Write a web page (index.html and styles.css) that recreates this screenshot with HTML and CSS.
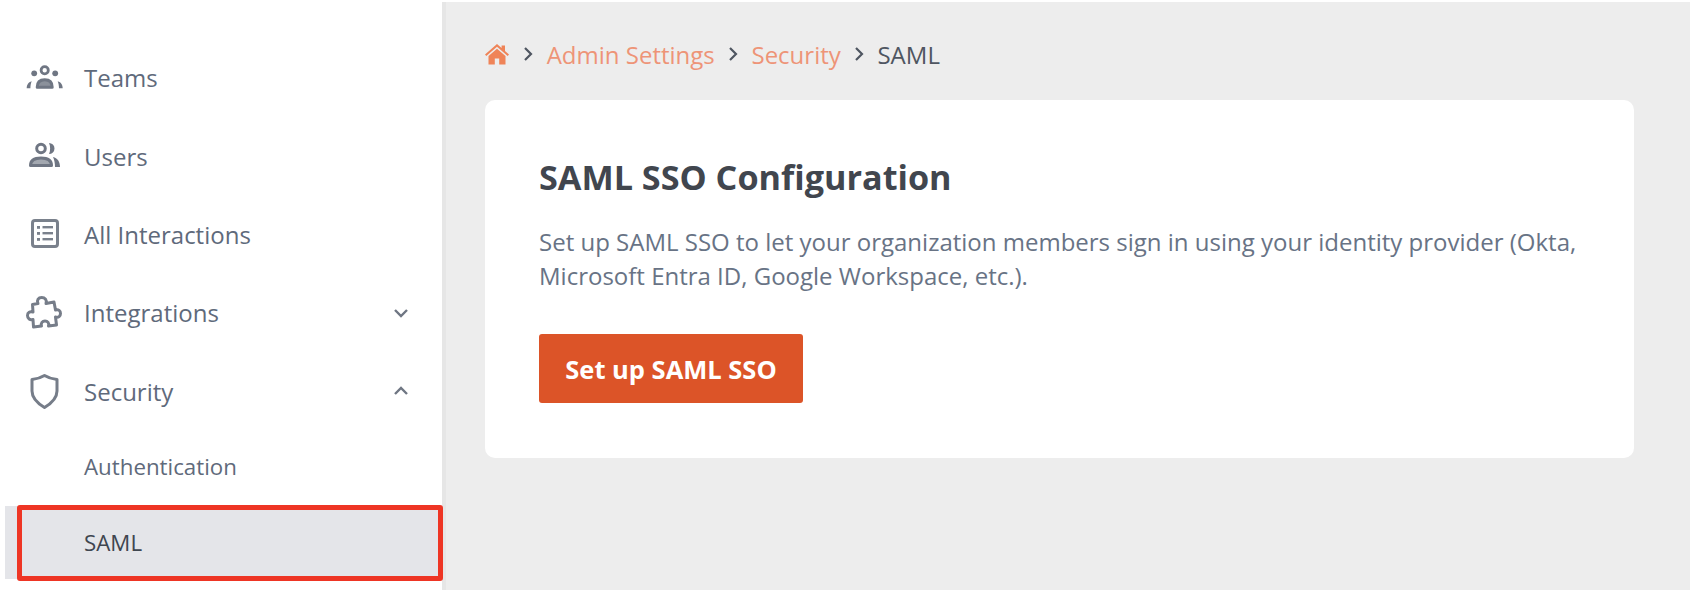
FILE: index.html
```html
<!DOCTYPE html>
<html>
<head>
	<meta charset="utf-8">
	<title>SAML</title>
	<link rel="stylesheet" href="styles.css">
</head>
<body>
	<div class="sidebar">
		<a class="item">
			<svg class="icon" viewBox="0 0 40 40"><g fill="#6f7683" transform="translate(.7 .3)"><circle cx="20" cy="12" r="3.600" fill="none" stroke="#6f7683" stroke-width="2.800"/><circle cx="9.500" cy="15" r="2.900"/><circle cx="30.500" cy="15" r="2.900"/><path d="M12.500 29c0-5 3-7.500 7.500-7.500s7.500 2.500 7.500 7.500z" fill="#8b919b" stroke="#6f7683" stroke-width="3" stroke-linejoin="round"/><path d="M2 30c0-3 1.500-6 5-7-.8 2-1.300 4.500-1.300 7zM38 30c0-3-1.500-6-5-7 .8 2 1.300 4.500 1.300 7z"/></g></svg>
			<span>Teams</span>
		</a>
		<a class="item">
			<svg class="icon" viewBox="0 0 40 40"><g fill="none" stroke="#6f7683" stroke-width="3"><circle cx="17" cy="12.500" r="4.300"/><path d="M6.500 29.500c0-5 4-7.500 10.500-7.500s10.500 2.500 10.500 7.500z" fill="#a3a8b0" stroke-linejoin="round"/></g><path d="M25 7a5.500 5.500 0 0 1 0 11c1.500-3 1.500-8 0-11zM29 21c4.500 1 7 4.500 7 10h-5c0-4-.6-7-2-10z" fill="#6f7683"/></svg>
			<span>Users</span>
		</a>
		<a class="item">
			<svg class="icon" viewBox="0 0 40 40"><rect x="8.500" y="6.500" width="25" height="26" rx="2.500" fill="none" stroke="#7a818c" stroke-width="3"/><g fill="#7a818c"><rect x="13" y="12" width="3" height="2.800"/><rect x="13" y="18" width="3" height="2.800"/><rect x="13" y="24" width="3" height="2.800"/><rect x="18.500" y="12" width="10.500" height="2.400"/><rect x="18.500" y="18" width="10.500" height="2.400"/><rect x="18.500" y="24" width="10.500" height="2.400"/></g></svg>
			<span>All Interactions</span>
		</a>
		<a class="item">
			<svg class="icon" viewBox="0 0 40 40"><path d="M14 10.500c-1.500-3.500.5-6 3.700-6s5.500 2.500 4.300 6l8-1.500 1.500 8c3-1 5 1 5 3.500s-2 4.500-5 3.500l1 8-8 1c1-3-1-5-3.500-5s-4.500 2-3.500 5l-8 1-.5-7.500c-3 1-5.500-1-5.500-4s2.500-4.500 5.500-3.500l-.5-7.500z" fill="none" stroke="#767d89" stroke-width="3" stroke-linejoin="round"/></svg>
			<span>Integrations</span>
			<svg class="chevron" viewBox="0 0 16 10"><path d="M2 2l6 6 6-6" fill="none" stroke="#6f7683" stroke-width="2.400"/></svg>
		</a>
		<a class="item">
			<svg class="icon" viewBox="0 0 40 40"><path d="M20.500 4.500c4 2.500 8 3.500 12.500 4v11.500c0 7-5 12-12.500 16.500C13 32 8 27 8 20V8.500c4.500-.5 8.500-1.500 12.500-4z" fill="none" stroke="#767d89" stroke-width="3" stroke-linejoin="round"/></svg>
			<span>Security</span>
			<svg class="chevron" viewBox="0 0 16 10"><path d="M2 8l6-6 6 6" fill="none" stroke="#6f7683" stroke-width="2.400"/></svg>
		</a>
		<a class="subitem first">Authentication</a>
		<a class="subitem active">SAML<i class="highlight"></i></a>
	</div>
	<div class="main">
		<div class="breadcrumb">
			<svg class="home" viewBox="0 0 26 22"><path d="M13 1L1 11.500l1.300 1.500L13 3.800 23.700 13l1.300-1.500-4-3.500V2.500h-3.400v2.600z" fill="#ef8458"/><path d="M13 5.800L4.500 13v8.500h6.300v-6h4.400v6h6.300V13z" fill="#ef8458"/></svg>
			<svg class="sep" viewBox="0 0 10 16"><path d="M2 2l6 6-6 6" fill="none" stroke="#4f5661" stroke-width="2.200"/></svg>
			<a>Admin Settings</a>
			<svg class="sep" viewBox="0 0 10 16"><path d="M2 2l6 6-6 6" fill="none" stroke="#4f5661" stroke-width="2.200"/></svg>
			<a>Security</a>
			<svg class="sep" viewBox="0 0 10 16"><path d="M2 2l6 6-6 6" fill="none" stroke="#4f5661" stroke-width="2.200"/></svg>
			<span>SAML</span>
		</div>
		<div class="card">
			<h1>SAML SSO Configuration</h1>
			<p>Set up SAML SSO to let your organization members sign in using your identity provider (Okta, Microsoft Entra ID, Google Workspace, etc.).</p>
			<button>Set up SAML SSO</button>
		</div>
	</div>
</body>
</html>
```
FILE: styles.css
```css
* {
	box-sizing: border-box;
}
html, body {
	height: 100%;
}
body {
	margin: 0;
	display: flex;
	height: 590px;
	overflow: hidden;
	font-family: "Open Sans", sans-serif;
	background: #fff;
}
.sidebar {
	width: 442px;
	background: #fff;
	padding-top: 38.5px;
	flex-shrink: 0;
}
.item {
	display: flex;
	align-items: center;
	height: 78.4px;
	padding-left: 24px;
	padding-right: 33px;
	font-size: 24px;
	color: #5f6a7b;
}
.icon {
	width: 40px;
	height: 40px;
	margin-right: 20px;
}
.chevron {
	width: 16px;
	height: 10px;
	margin-left: auto;
}
.subitem {
	position: relative;
	display: flex;
	align-items: center;
	height: 73px;
	margin-left: 5px;
	padding-left: 79px;
	font-size: 22.3px;
	color: #5f6a7b;
}
.first {
	margin-bottom: 2.5px;
}
.active {
	background: #e4e5e9;
	color: #3f4650;
}
.highlight {
	position: absolute;
	left: 12px;
	top: -1px;
	right: -1px;
	bottom: -2px;
	border: 5px solid #ee3524;
	border-radius: 3px;
}
.main {
	flex: 1;
	margin-top: 2px;
	padding: 33px 56px 0 39px;
	background: #ededed;
	border-left: 4px solid #e6e6e6;
}
.breadcrumb {
	display: flex;
	align-items: center;
	height: 38px;
	font-size: 24px;
	color: #4f5661;
}
.breadcrumb a {
	color: #ee9477;
}
.home {
	width: 26px;
	height: 22px;
	margin: 0 0 0 -1px;
}
.sep {
	width: 10px;
	height: 16px;
	margin: 0 13.7px 0 13px;
}
.card {
	margin-top: 27px;
	height: 358px;
	padding: 55px 54px;
	background: #fff;
	border-radius: 10px;
}
h1 {
	margin: 0;
	font-size: 34.2px;
	line-height: 44px;
	font-weight: 700;
	color: #41464e;
}
p {
	margin: 26px 0 0;
	font-size: 24px;
	line-height: 34px;
	color: #687385;
}
button {
	display: block;
	margin-top: 41px;
	width: 264px;
	height: 69px;
	border: 0;
	border-radius: 3px;
	background: #dc5428;
	color: #fff;
	font-family: inherit;
	font-size: 25.5px;
	font-weight: 700;
}
```
